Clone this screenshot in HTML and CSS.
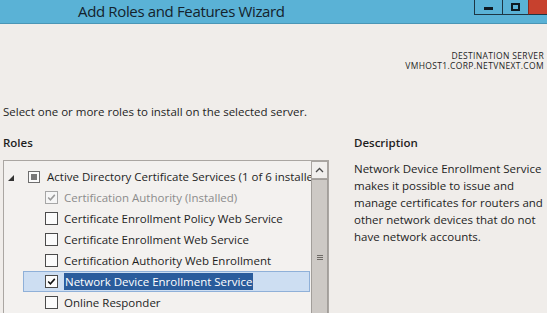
FILE: index.html
```html
<!DOCTYPE html>
<html lang="en">
  <head>
    <meta charset="UTF-8" />
    <title>Add Roles and Features Wizard</title>
    <link rel="stylesheet" href="styles.css">
  </head>
  <body>
    <div class="window">
      <header class="titlebar">
        <h1 class="title">Add Roles and Features Wizard</h1>
        <div class="controls">
          <span class="ctl ctl-min"><i></i></span>
          <span class="ctl ctl-max"><i></i></span>
          <span class="ctl ctl-close"></span>
        </div>
      </header>

      <div class="dest">
        <p>DESTINATION SERVER</p>
        <p>VMHOST1.CORP.NETVNEXT.COM</p>
      </div>

      <p class="intro">Select one or more roles to install on the selected server.</p>

      <div class="columns">
        <section class="roles">
          <h2>Roles</h2>
          <div class="listbox">
            <ul class="tree">
              <li class="row parent">
                <span class="toggle"></span>
                <span class="box partial"><i></i></span>
                <span class="label">Active Directory Certificate Services (1 of 6 installed)</span>
              </li>
              <li class="row child disabled">
                <span class="box checked">
                  <svg viewBox="0 0 13 13" width="13" height="13"><path d="M2.6 6.6 L5.2 9.2 L10.4 3.4" /></svg>
                </span>
                <span class="label">Certification Authority (Installed)</span>
              </li>
              <li class="row child">
                <span class="box"></span>
                <span class="label">Certificate Enrollment Policy Web Service</span>
              </li>
              <li class="row child">
                <span class="box"></span>
                <span class="label">Certificate Enrollment Web Service</span>
              </li>
              <li class="row child">
                <span class="box"></span>
                <span class="label">Certification Authority Web Enrollment</span>
              </li>
              <li class="row child selected">
                <span class="box checked">
                  <svg viewBox="0 0 13 13" width="13" height="13"><path d="M2.6 6.6 L5.2 9.2 L10.4 3.4" /></svg>
                </span>
                <span class="label">Network Device Enrollment Service</span>
              </li>
              <li class="row child">
                <span class="box"></span>
                <span class="label">Online Responder</span>
              </li>
            </ul>
            <div class="scrollbar">
              <div class="scroll-up">
                <svg viewBox="0 0 15 17" width="15" height="17"><path d="M4 10 L7.5 6.5 L11 10" /></svg>
              </div>
              <div class="thumb"><span class="grip"></span></div>
            </div>
          </div>
        </section>

        <section class="desc">
          <h2>Description</h2>
          <p>Network Device Enrollment Service makes it possible to issue and manage certificates for routers and other network devices that do not have network accounts.</p>
        </section>
      </div>
    </div>
  </body>
</html>
```

FILE: styles.css
```css
/* Reset */
* {
  margin: 0;
  padding: 0;
  box-sizing: border-box;
}

html,
body {
  height: 100%;
  overflow: hidden;
}

body {
  font-family: "Open Sans", "Noto Sans", sans-serif;
  background: #f0edea;
  color: #1e1e1e;
}

/* Title bar */
.titlebar {
  display: flex;
  align-items: flex-start;
  height: 24px;
  background: #5ab2d6;
  border-bottom: 1px solid #4a96b6;
}

.title {
  font-weight: normal;
  font-size: 15px;
  letter-spacing: -0.35px;
  line-height: 22px;
  color: #14222c;
  margin-left: 78px;
  flex-grow: 1;
}

.controls {
  display: flex;
}

.ctl {
  display: flex;
  justify-content: center;
  align-items: center;
  height: 15px;
  border-bottom: 1px solid #1d3644;
  border-left: 1px solid #1d3644;
}
.ctl-min {
  width: 28px;
}
.ctl-min i {
  width: 9px;
  height: 3px;
  background: #0e1a22;
  margin-top: 3px;
}
.ctl-max {
  width: 26px;
}
.ctl-max i {
  width: 9px;
  height: 8px;
  border: 2px solid #0e1a22;
  margin-top: -1px;
}
.ctl-close {
  width: 19px;
  background: #c7412e;
  border-left-color: #8a2a1e;
}

/* Destination server */
.dest {
  margin-top: 27px;
  padding-right: 3px;
  text-align: right;
  font-size: 8.5px;
  letter-spacing: 0.35px;
  line-height: 10px;
}

/* Intro */
.intro {
  margin-top: 33px;
  padding-left: 3px;
  font-size: 11.5px;
  line-height: 16px;
}

/* Columns */
.columns {
  display: flex;
  margin-top: 15px;
  padding-left: 3px;
}

h2 {
  font-size: 11.5px;
  font-weight: 600;
  line-height: 16px;
}

.roles {
  width: 326px;
  flex-shrink: 0;
}

.roles h2 {
  margin-bottom: 9px;
}

.listbox {
  display: flex;
  height: 200px;
  border: 1px solid #aaa6a2;
  background: #f3f1ef;
}

.tree {
  list-style: none;
  flex-grow: 1;
  overflow: hidden;
  padding-top: 5px;
}

.row {
  display: flex;
  align-items: center;
  height: 21px;
  font-size: 11.5px;
  white-space: nowrap;
  border: 1px solid transparent;
}

.row.parent {
  padding-left: 3px;
}

.row.child {
  margin-left: 19px;
  padding-left: 21px;
  margin-right: 1px;
}

.toggle {
  width: 0;
  height: 0;
  border-left: 6px solid transparent;
  border-bottom: 6px solid #333;
  margin-top: 3px;
  margin-right: 14px;
}

.box {
  display: flex;
  justify-content: center;
  align-items: center;
  width: 13px;
  height: 13px;
  flex-shrink: 0;
  border: 1px solid #4b4b4b;
  background: #fbfbfb;
  margin-right: 6px;
}

.box svg {
  fill: none;
  stroke: #111;
  stroke-width: 1.8;
}

.box.partial {
  width: 12px;
  height: 12px;
  border-color: #6e6e6e;
  margin-right: 7px;
}
.box.partial i {
  width: 6px;
  height: 6px;
  background: #787878;
}

.row.disabled {
  color: #8c8c8c;
}
.row.disabled .box {
  border-color: #a6a6a6;
  background: #f6f6f6;
}
.row.disabled .box svg {
  stroke: #9a9a9a;
}

.row.selected {
  background: #cddef2;
  border-color: #8fb0d8;
}
.row.selected .label {
  background: #2a5c9c;
  color: #fff;
  padding: 1px 1px;
}

/* Scrollbar */
.scrollbar {
  width: 17px;
  flex-shrink: 0;
  display: flex;
  flex-direction: column;
}

.scroll-up {
  height: 18px;
  border: 1px solid #a9a5a1;
  background: #f1efed;
  display: flex;
  justify-content: center;
  align-items: center;
}
.scroll-up svg {
  fill: none;
  stroke: #4a4a4a;
  stroke-width: 1.3;
}

.thumb {
  height: 156px;
  background: #cdc9c5;
  border: 1px solid #a29e9a;
  display: flex;
  justify-content: center;
  align-items: center;
}
.grip {
  width: 6px;
  height: 5px;
  border-top: 1px solid #6e6a66;
  border-bottom: 1px solid #6e6a66;
  position: relative;
}
.grip::after {
  content: "";
  position: absolute;
  left: 0;
  right: 0;
  top: 1px;
  border-top: 1px solid #6e6a66;
}

/* Description */
.desc {
  margin-left: 25px;
  width: 192px;
}

.desc h2 {
  margin-bottom: 9px;
}

.desc p {
  font-size: 11.5px;
  line-height: 17px;
}
```
